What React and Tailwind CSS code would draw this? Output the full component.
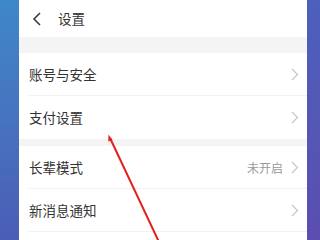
import React from 'react';

const Chevron = () => (
  <svg width="8" height="13" viewBox="0 0 8 13" className="shrink-0">
    <path d="M1 1 L6.5 6.5 L1 12" fill="none" stroke="#c4c4c4" strokeWidth="1.1" />
  </svg>
);

const Row = ({ label, value, divider = true }) => (
  <div className="h-[43px] shrink-0 flex items-center pl-[10px] pr-[8px] relative">
    <span className="flex-1 text-[13.5px] text-[#333]">{label}</span>
    {value && <span className="text-[12px] text-[#999] mr-[8px]">{value}</span>}
    <Chevron />
    {divider && <div className="absolute left-[10px] right-0 bottom-0 h-px bg-[#f1f1f1]" />}
  </div>
);

export default function App() {
  return (
    <div
      className="relative w-[320px] h-[240px] overflow-hidden flex"
      style={{ fontFamily: '"Noto Sans CJK SC", "Noto Sans", sans-serif' }}
    >
      <div className="w-[19px] bg-gradient-to-b from-[#3e88c9] to-[#4b5db5]" />
      <div className="flex-1 bg-white flex flex-col overflow-hidden">
        <div className="h-[37px] flex items-center pl-[13px] shrink-0">
          <svg width="10" height="14" viewBox="0 0 10 14">
            <path d="M8 1 L2 7 L8 13" fill="none" stroke="#333" strokeWidth="1.5" />
          </svg>
          <span className="ml-[16px] text-[13.5px] text-[#333]">设置</span>
        </div>
        <div className="h-[16px] bg-[#f4f4f4] shrink-0" />
        <Row label="账号与安全" />
        <Row label="支付设置" divider={false} />
        <div className="h-[7px] bg-[#f4f4f4] shrink-0" />
        <Row label="长辈模式" value="未开启" />
        <Row label="新消息通知" />
        <div className="h-[43px] shrink-0" />
      </div>
      <div className="w-[13px] bg-gradient-to-b from-[#4c60bc] to-[#5a4eb0]" />
      <svg className="absolute left-0 top-0" width="320" height="240" viewBox="0 0 320 240">
        <line x1="110" y1="138" x2="159" y2="242" stroke="#e3201c" strokeWidth="2" />
        <path d="M108.5 134.5 L112.5 140 L108.3 141.5 Z" fill="#e3201c" />
      </svg>
    </div>
  );
}
